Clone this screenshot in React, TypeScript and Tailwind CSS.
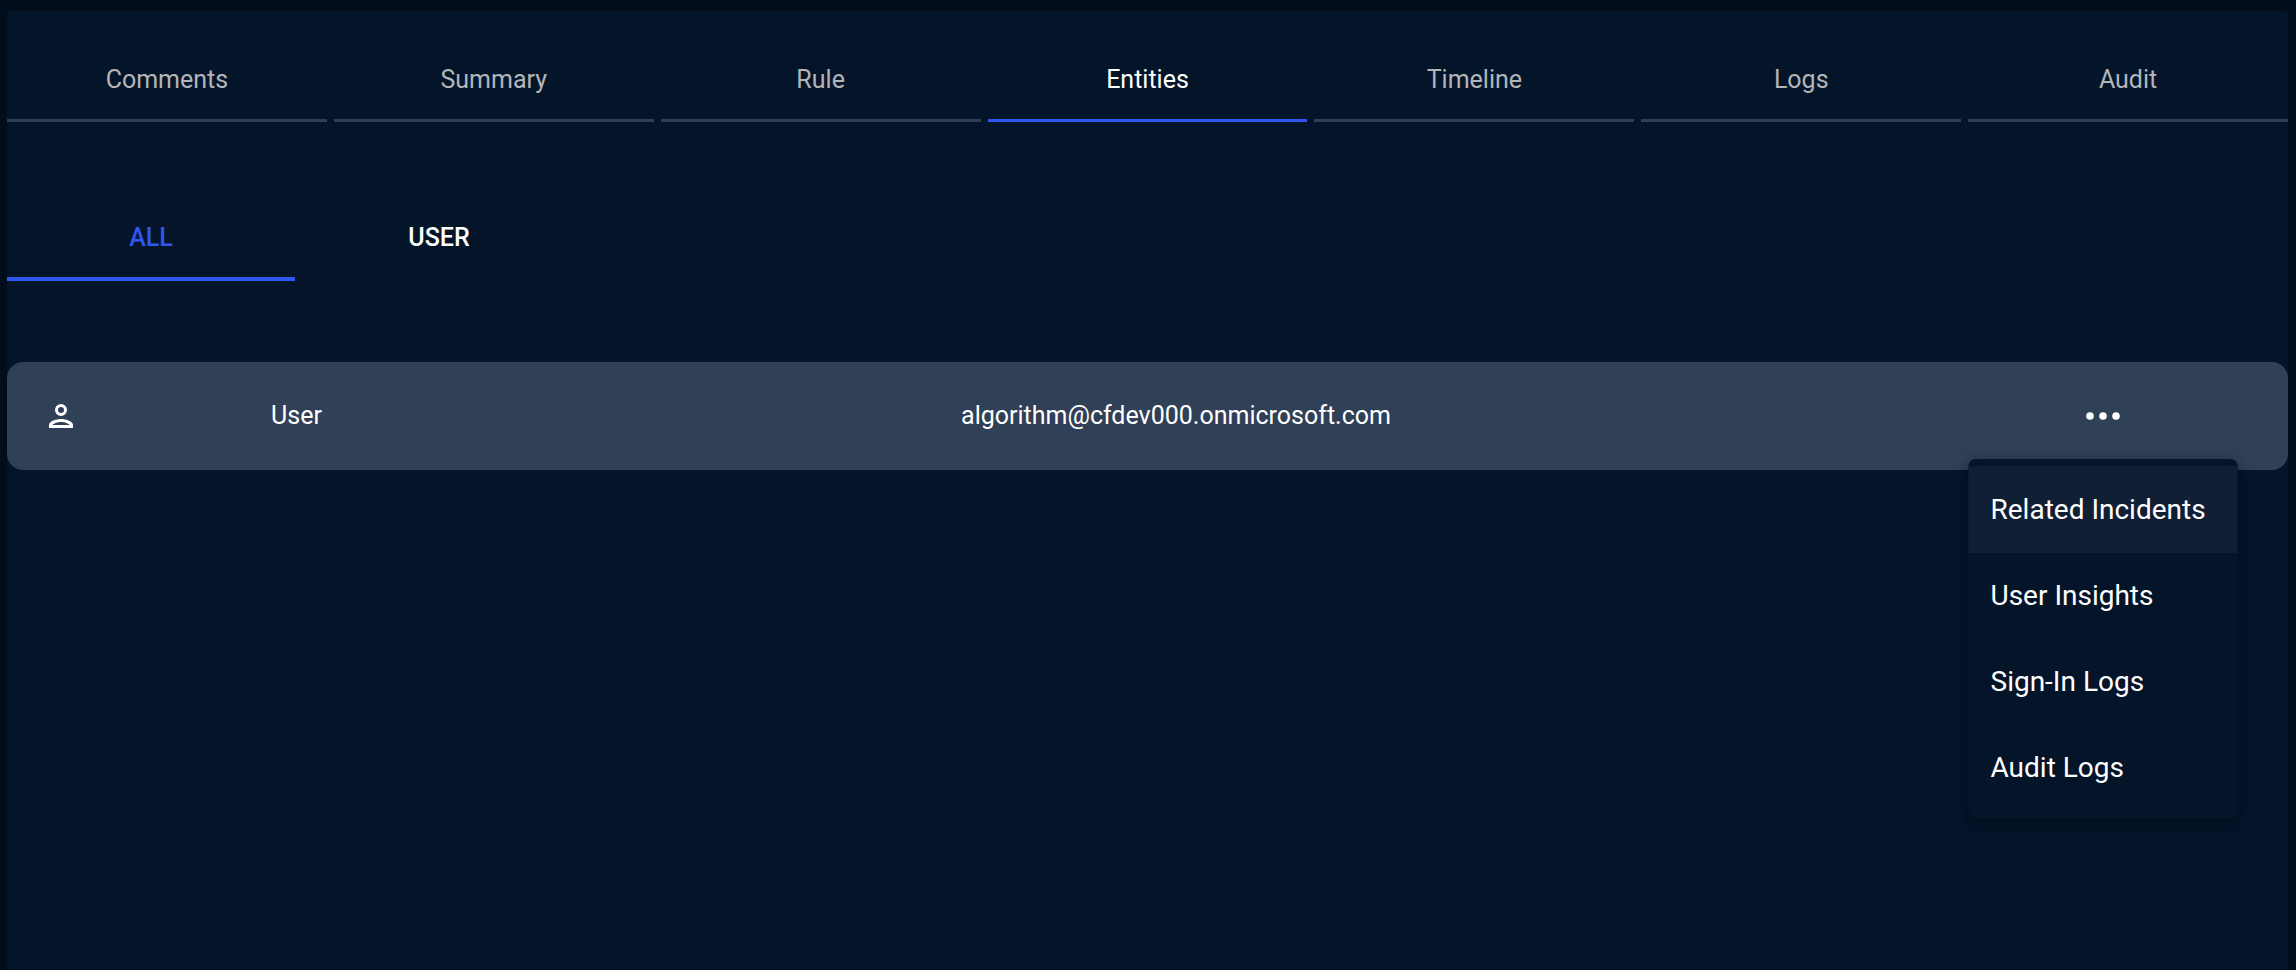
import { useState } from "react";

const tabs = ["Comments", "Summary", "Rule", "Entities", "Timeline", "Logs", "Audit"];
const filters = ["ALL", "USER"];
const actions = ["Related Incidents", "User Insights", "Sign-In Logs", "Audit Logs"];

function PersonIcon() {
  return (
    <svg viewBox="0 0 36 36" className="ml-9 size-9" fill="currentColor" fillRule="evenodd" aria-hidden="true">
      <path d="M18 6a6 6 0 1 1 0 12a6 6 0 0 1 0-12zm0 3a3 3 0 1 0 0 6a3 3 0 0 0 0-6z" />
      <path d="M6 30v-3c0-4 8-6 12-6s12 2 12 6v3zM9.3 27h17.4c-1-1.5-5.2-3-8.7-3s-7.700 1.500-8.700 3z" />
    </svg>
  );
}

export default function App() {
  const [tab, setTab] = useState("Entities");
  const [filter, setFilter] = useState("ALL");
  const [open, setOpen] = useState(true);

  return (
    <div className="flex min-h-screen flex-col bg-[#010c1d] pt-[11px] pr-2 pb-px pl-[7px] font-[Roboto,sans-serif] text-[25px] leading-[30px] text-white">
      <main className="flex-1 rounded-t bg-[#04152a]">
        <nav role="tablist" aria-label="Incident sections" className="grid grid-cols-7 gap-[7px]">
          {tabs.map((name) => (
            <button
              key={name}
              role="tab"
              aria-selected={tab === name}
              onClick={() => setTab(name)}
              className={
                tab === name
                  ? "border-b-[3px] border-[#3056f0] pt-[54px] pb-6 text-white"
                  : "border-b-[3px] border-[#2e3e55] pt-[54px] pb-6 text-[#b3b5b9]"
              }
            >
              {name}
            </button>
          ))}
        </nav>

        <div role="tablist" aria-label="Entity types" className="mt-[68px] flex">
          {filters.map((name) => (
            <button
              key={name}
              role="tab"
              aria-selected={filter === name}
              onClick={() => setFilter(name)}
              className={
                filter === name
                  ? "w-72 border-b-4 border-[#3056f0] pt-[33px] pb-6 font-medium text-[#3056f0]"
                  : "w-72 border-b-4 border-transparent pt-[33px] pb-6 font-medium text-white"
              }
            >
              {name}
            </button>
          ))}
        </div>

        <section
          aria-label="Entity"
          className="mt-[81px] grid h-[108px] grid-cols-[152px_275fr_1484fr_370fr] items-center rounded-2xl bg-[#304057] text-center"
        >
          <PersonIcon />
          <span>User</span>
          <span>algorithm@cfdev000.onmicrosoft.com</span>
          <div className="relative flex justify-center">
            <button aria-label="Actions" aria-expanded={open} onClick={() => setOpen(!open)} className="p-2">
              <svg viewBox="0 0 34 8" className="h-2 w-[34px]" fill="currentColor">
                <circle cx="4" cy="4" r="3.8" />
                <circle cx="17" cy="4" r="3.8" />
                <circle cx="30" cy="4" r="3.8" />
              </svg>
            </button>
            {open && (
              <div
                role="menu"
                className="absolute top-full left-1/2 z-10 mt-[31px] w-[269px] -translate-x-1/2 rounded-[7px] bg-[#04152a] py-[7px] text-left text-[28px] shadow-[0_9px_9px_-5px_rgba(4,16,26,0.8),0_4px_14px_0px_rgba(4,16,26,0.6)]"
              >
                {actions.map((name, i) => (
                  <button
                    key={name}
                    role="menuitem"
                    className={
                      i === 0
                        ? "block h-[87px] w-full bg-[#101f33] px-[22px] text-left whitespace-nowrap"
                        : "block h-[86px] w-full px-[22px] text-left whitespace-nowrap hover:bg-[#101f33]"
                    }
                  >
                    {name}
                  </button>
                ))}
              </div>
            )}
          </div>
        </section>
      </main>
    </div>
  );
}
